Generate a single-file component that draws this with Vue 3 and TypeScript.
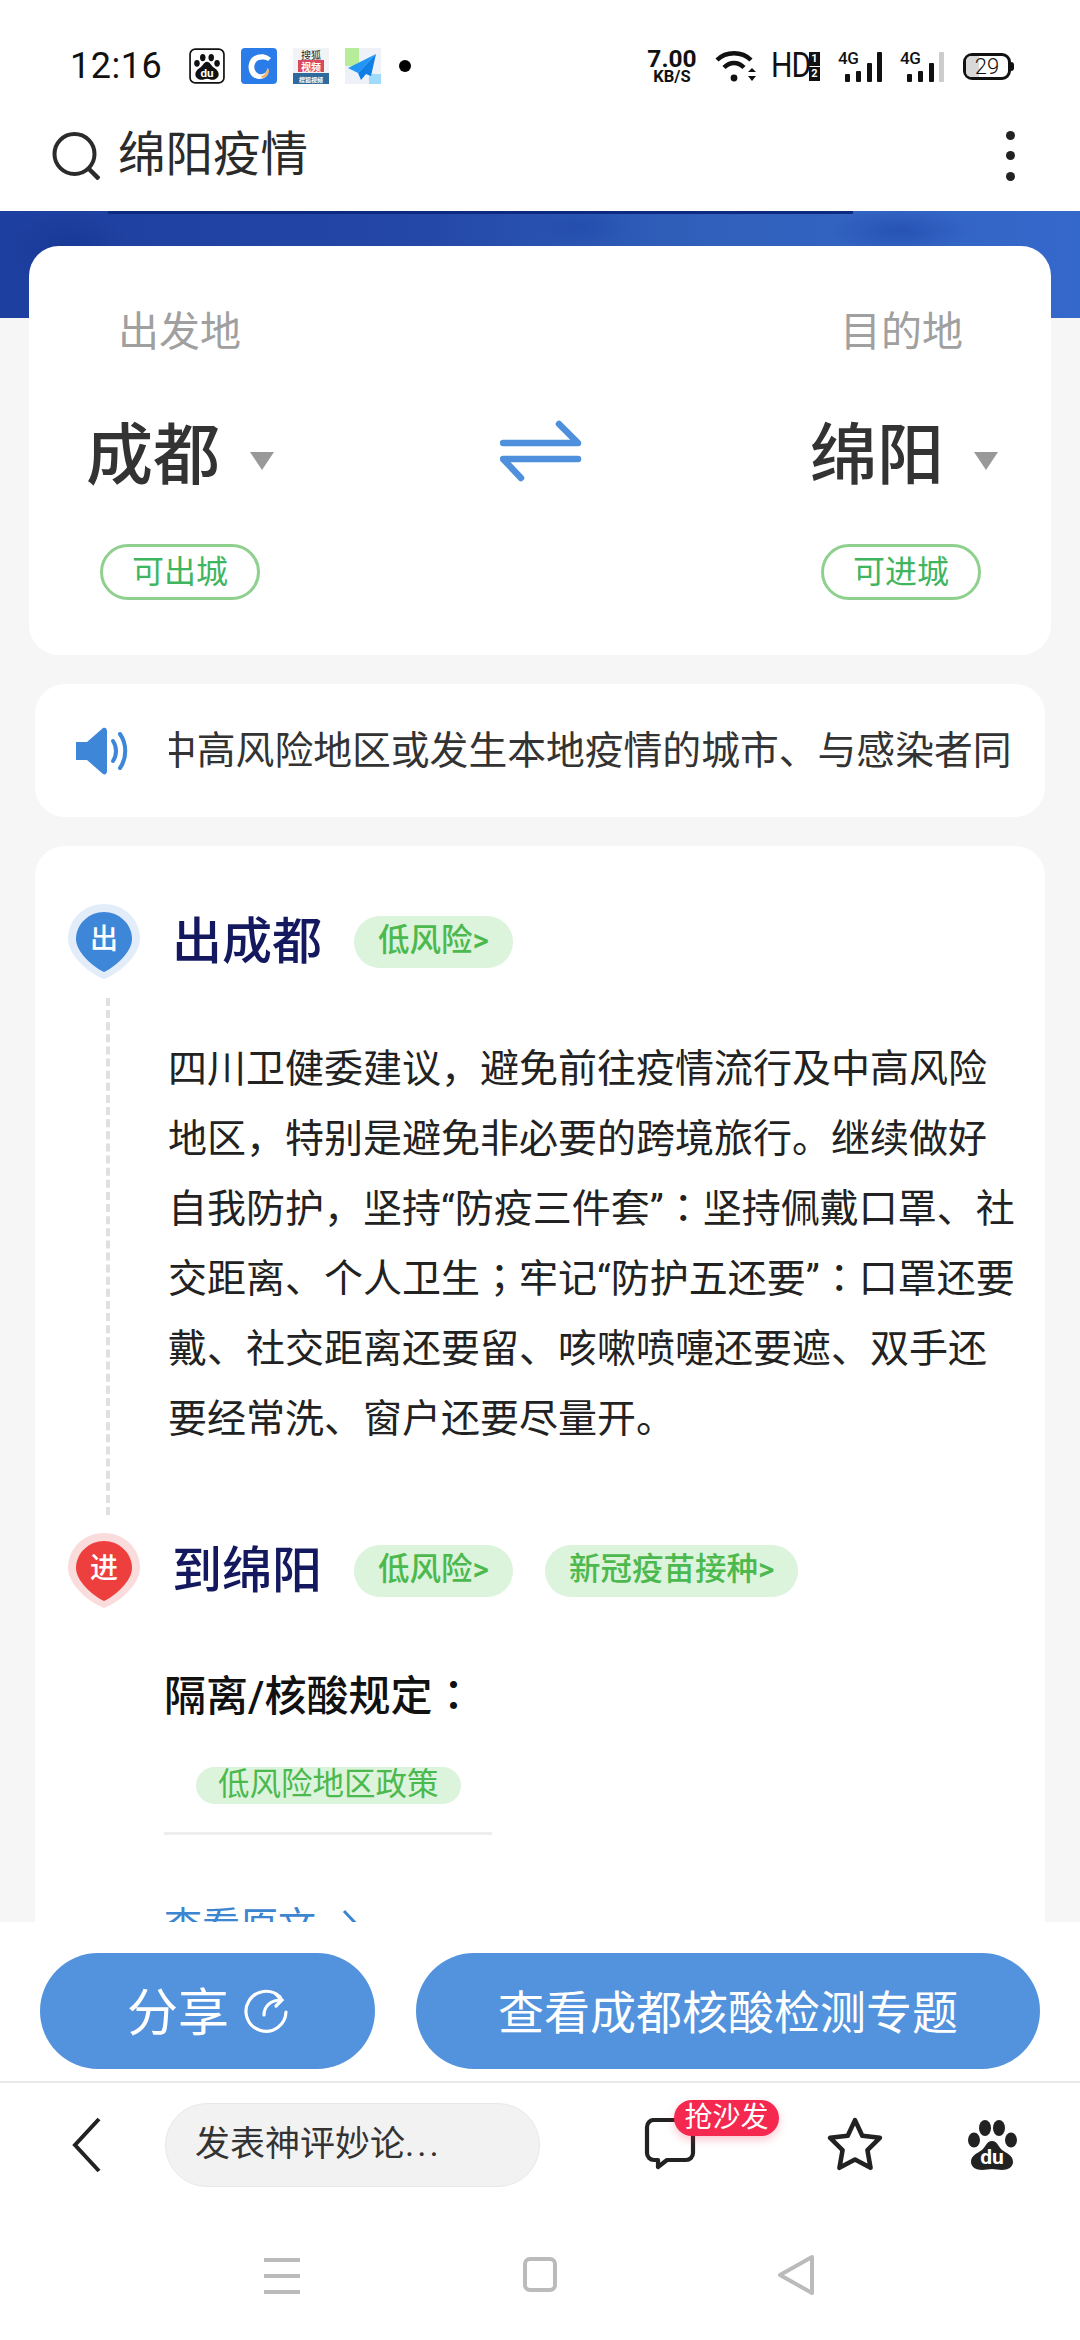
<template>
  <div class="phone">
    <!-- status bar -->
    <div class="status">
      <span class="time">12:16</span>
      <svg class="app-icon baidu" viewBox="0 0 34 34">
        <rect x="1" y="1" width="32" height="32" rx="5" fill="#fff" stroke="#111" stroke-width="1.6" />
        <ellipse cx="13" cy="9" rx="2.6" ry="3.4" fill="#111" />
        <ellipse cx="21" cy="9" rx="2.6" ry="3.4" fill="#111" />
        <ellipse cx="7.5" cy="14.5" rx="2.6" ry="3.2" fill="#111" />
        <ellipse cx="26.5" cy="14.5" rx="2.6" ry="3.2" fill="#111" />
        <path d="M17 13C20 13 21 17 24 19C27 21 28 23 28 25C28 28 25 30 22 30C20 30 19 29 17 29C15 29 14 30 12 30C9 30 6 28 6 25C6 23 7 21 10 19C13 17 14 13 17 13Z" fill="#111" />
        <text x="17" y="27" text-anchor="middle" class="du-small">du</text>
      </svg>
      <svg class="app-icon dolphin" viewBox="0 0 36 36">
        <rect width="36" height="36" rx="4" fill="#2a7de8" />
        <path d="M27 8C22 5 14 6 10 11C6 17 7 25 12 29C15 31 19 32 23 30C27 28 28 24 27 20C26 25 22 27 18 26C13 24 12 18 15 14C18 11 23 11 27 13L30 10Z" fill="#fff" />
        <path d="M20 28C24 27 26 24 26 20L28 22C28 27 25 30 21 30Z" fill="#f2b36b" />
      </svg>
      <svg class="app-icon sohu" viewBox="0 0 36 36">
        <rect width="36" height="36" fill="#f2f3f5" />
        <rect y="25" width="36" height="11" fill="#2f6a9c" />
        <rect x="5" y="12" width="26" height="12" fill="#d9485c" />
        <text x="18" y="10.5" text-anchor="middle" class="sohu-top">搜狐</text>
        <text x="18" y="22.5" text-anchor="middle" class="sohu-mid">视频</text>
        <text x="18" y="33.5" text-anchor="middle" class="sohu-low">搜狐视频</text>
      </svg>
      <svg class="app-icon plane" viewBox="0 0 36 36">
        <rect width="36" height="36" fill="#eef2f8" />
        <rect width="14" height="18" fill="#b6ec9a" />
        <rect x="24" y="26" width="12" height="10" fill="#9fdcfb" />
        <path d="M31 6L3 20L13 25Z" fill="#2196f5" />
        <path d="M31 6L13 25L16 32L21 26L26 28Z" fill="#0f7fe6" />
      </svg>
      <span class="dot"></span>

      <div class="status-right">
        <div class="speed">
          <span class="speed-num">7.00</span>
          <span class="speed-unit">KB/S</span>
        </div>
        <svg class="wifi" viewBox="0 0 42 32">
          <path d="M2 10C11 1 27 1 36 10" fill="none" stroke="#111" stroke-width="4.4" />
          <path d="M9 17.5C15 11.5 23 11.5 29 17.5" fill="none" stroke="#111" stroke-width="4.4" />
          <circle cx="19" cy="28" r="3.4" fill="#111" />
          <path d="M33 22L37 18L41 22ZM33 26L37 31L41 26Z" fill="#111" />
        </svg>
        <span class="hd">HD</span>
        <div class="sim">
          <span class="sim-top">1</span>
          <span class="sim-bottom">2</span>
        </div>
        <div class="signal">
          <span class="net">4G</span>
          <i class="bar b1"></i><i class="bar b2"></i><i class="bar b3"></i><i class="bar b4"></i>
        </div>
        <div class="signal second">
          <span class="net">4G</span>
          <i class="bar b1"></i><i class="bar b2"></i><i class="bar b3"></i><i class="bar b4 off"></i>
        </div>
        <div class="battery">
          <span class="battery-fill"></span>
          <span class="battery-num">29</span>
        </div>
      </div>
    </div>

    <!-- search header -->
    <div class="search-bar">
      <svg class="search-icon" viewBox="0 0 48 48">
        <circle cx="22.5" cy="22" r="20" fill="none" stroke="#2b2b2b" stroke-width="4" />
        <path d="M36 36L47 47" stroke="#2b2b2b" stroke-width="4.5" />
      </svg>
      <span class="keyword">绵阳疫情</span>
      <div class="more"><i></i><i></i><i></i></div>
    </div>

    <div class="content">
      <div class="banner"></div>

      <section class="route-card">
        <div class="route-side">
          <span class="route-label">出发地</span>
          <div class="city">成都<span class="caret"></span></div>
          <span class="state">可出城</span>
        </div>
        <svg class="swap" viewBox="0 0 82 62">
          <path d="M3 23H78L59 4" fill="none" stroke="#4f90dc" stroke-width="6.5" stroke-linecap="round" stroke-linejoin="round" />
          <path d="M78 39H3L21 58" fill="none" stroke="#4f90dc" stroke-width="6.5" stroke-linecap="round" stroke-linejoin="round" />
        </svg>
        <div class="route-side right">
          <span class="route-label">目的地</span>
          <div class="city">绵阳<span class="caret"></span></div>
          <span class="state">可进城</span>
        </div>
      </section>

      <section class="notice">
        <svg class="speaker" viewBox="0 0 54 48">
          <path d="M1 15H12L28 1C30 0 32 1 32 4V44C32 47 30 48 28 47L12 33H1Z" fill="#3d86d8" />
          <path d="M38 14C42 20 42 28 38 34" fill="none" stroke="#3d86d8" stroke-width="4" stroke-linecap="round" />
          <path d="M45 7C52 17 52 31 45 41" fill="none" stroke="#3d86d8" stroke-width="4" stroke-linecap="round" />
        </svg>
        <div class="notice-track">
          <span>{{ noticeText }}</span>
        </div>
      </section>

      <section class="detail">
        <div class="step-head">
          <svg class="pin" viewBox="0 0 72 75">
            <path d="M36 0C56 0 72 15 72 35C72 52 50 70 36 75C22 70 0 52 0 35C0 15 16 0 36 0Z" fill="#e3edf9" />
            <path d="M36 8C51 8 64 20 64 35C64 48 47 63 36 68C25 63 8 48 8 35C8 20 21 8 36 8Z" fill="#3d86d8" />
            <text x="36" y="45" text-anchor="middle" class="pin-text">出</text>
          </svg>
          <h2 class="step-title">出成都</h2>
          <span class="tag">低风险&gt;</span>
        </div>

        <div class="step-body">
          <p>四川卫健委建议，避免前往疫情流行及中高风险地区，特别是避免非必要的跨境旅行。继续做好自我防护，坚持“防疫三件套”<span class="mid-punct">：</span>坚持佩戴口罩、社交距离、个人卫生<span class="mid-punct">；</span>牢记“防护五还要”<span class="mid-punct">：</span>口罩还要戴、社交距离还要留、咳嗽喷嚏还要遮、双手还要经常洗、窗户还要尽量开。</p>
        </div>

        <div class="step-head second">
          <svg class="pin" viewBox="0 0 72 75">
            <path d="M36 0C56 0 72 15 72 35C72 52 50 70 36 75C22 70 0 52 0 35C0 15 16 0 36 0Z" fill="#fbdcdc" />
            <path d="M36 8C51 8 64 20 64 35C64 48 47 63 36 68C25 63 8 48 8 35C8 20 21 8 36 8Z" fill="#ee3f3f" />
            <text x="36" y="45" text-anchor="middle" class="pin-text">进</text>
          </svg>
          <h2 class="step-title">到绵阳</h2>
          <span class="tag">低风险&gt;</span>
          <span class="tag vaccine">新冠疫苗接种&gt;</span>
        </div>

        <div class="rules">
          <h3 class="rules-title">隔离/核酸规定<span class="mid-punct">：</span></h3>
          <span class="policy">低风险地区政策</span>
          <div class="rules-line"></div>
          <a class="origin">
            查看原文
            <svg class="origin-arrow" viewBox="0 0 22 38">
              <path d="M3 2L19 19L3 36" fill="none" stroke="#3c85d0" stroke-width="3" />
            </svg>
          </a>
        </div>
      </section>
    </div>

    <!-- action buttons -->
    <div class="actions">
      <button class="btn share">
        分享
        <svg class="share-icon" viewBox="0 0 44 46">
          <path d="M36 9A20 20 0 1 0 42 24" fill="none" stroke="#fff" stroke-width="3.2" stroke-linecap="round" />
          <path d="M20 27C20 18 27 12 37 12M32 6L38 12L32 18" fill="none" stroke="#fff" stroke-width="3.2" stroke-linecap="round" />
        </svg>
      </button>
      <button class="btn topic">查看成都核酸检测专题</button>
    </div>

    <!-- comment toolbar -->
    <div class="toolbar">
      <svg class="back" viewBox="0 0 30 56">
        <path d="M27 2L3 28L27 54" fill="none" stroke="#222" stroke-width="4" />
      </svg>
      <div class="comment-input">发表神评妙论<span class="dots">...</span></div>
      <div class="comment-btn">
        <svg viewBox="0 0 54 52">
          <path d="M11 2H43a7 7 0 0 1 7 7V35a7 7 0 0 1-7 7H24L15 49V42H11a7 7 0 0 1-7-7V9a7 7 0 0 1 7-7Z" fill="none" stroke="#222" stroke-width="4.2" stroke-linejoin="round" />
        </svg>
        <span class="badge">抢沙发</span>
      </div>
      <svg class="star" viewBox="0 0 54 52">
        <path d="M27 3L34 18L51 20L39 32L42 49L27 41L12 49L15 32L3 20L20 18Z" fill="none" stroke="#222" stroke-width="4.4" stroke-linejoin="round" />
      </svg>
      <svg class="paw" viewBox="0 0 50 50">
        <ellipse cx="17" cy="8" rx="6" ry="8" fill="#222" />
        <ellipse cx="31" cy="8" rx="6" ry="8" fill="#222" />
        <ellipse cx="6" cy="20" rx="6" ry="7.5" fill="#222" />
        <ellipse cx="43" cy="20" rx="6" ry="7.5" fill="#222" />
        <path d="M24 21C29 21 30 26 34 30C38 33 45 35 45 42C45 47 40 50 34 50C30 50 27 49 24 49C21 49 18 50 14 50C8 50 3 47 3 42C3 35 10 33 14 30C18 26 19 21 24 21Z" fill="#222" />
        <text x="24" y="44" text-anchor="middle" class="du-big">du</text>
      </svg>
    </div>

    <!-- system nav -->
    <div class="sys-nav">
      <div class="nav-menu"><i></i><i></i><i></i></div>
      <div class="nav-home"></div>
      <svg class="nav-back" viewBox="0 0 38 40">
        <path d="M35 2L3 20L35 38Z" fill="none" stroke="#bbb" stroke-width="4" stroke-linejoin="round" />
      </svg>
    </div>
  </div>
</template>

<script setup lang="ts">
const noticeText: string = '中高风险地区或发生本地疫情的城市、与感染者同'
</script>

<style>
html,
body {
  margin: 0;
  background: #fff;
}
</style>

<style scoped>
.phone {
  width: 1080px;
  height: 2340px;
  display: flex;
  flex-direction: column;
  overflow: hidden;
  background: #fff;
  font-family: Roboto, 'Noto Sans CJK SC', sans-serif;
  color: #222;
}

/* status bar */
.status {
  height: 100px;
  flex: none;
  display: flex;
  align-items: center;
  padding: 32px 0 0 70px;
  box-sizing: border-box;
}
.time {
  width: 119px;
  font-size: 36px;
  line-height: 40px;
  color: #111;
  letter-spacing: 0.5px;
}
.app-icon {
  width: 36px;
  height: 36px;
  margin-right: 16px;
  flex: none;
}
.du-small {
  font: 700 11px Roboto, sans-serif;
  fill: #fff;
}
.sohu-top {
  font: 10px 'Noto Sans CJK SC', sans-serif;
  fill: #222;
}
.sohu-mid {
  font: 700 10px 'Noto Sans CJK SC', sans-serif;
  fill: #fff;
}
.sohu-low {
  font: 700 6px 'Noto Sans CJK SC', sans-serif;
  fill: #fff;
}
.dot {
  width: 12px;
  height: 12px;
  border-radius: 50%;
  background: #000;
  margin-left: 2px;
}
.status-right {
  margin-left: auto;
  display: flex;
  align-items: center;
  height: 40px;
  padding-right: 69px;
}
.speed {
  width: 50px;
  display: flex;
  flex-direction: column;
  align-items: center;
  color: #111;
  line-height: 1;
}
.speed-num {
  font-size: 24.5px;
  font-weight: 700;
  height: 21px;
}
.speed-unit {
  font-size: 16.5px;
  font-weight: 700;
  margin-top: 1px;
}
.wifi {
  width: 42px;
  height: 32px;
  margin-left: 18px;
}
.hd {
  width: 37px;
  margin-left: 14px;
  font-size: 35px;
  line-height: 36px;
  color: #111;
  transform: scaleX(0.86);
  transform-origin: left center;
  letter-spacing: -1px;
}
.sim {
  width: 11px;
  height: 29px;
  margin-left: 1px;
  display: flex;
  flex-direction: column;
  gap: 1px;
}
.sim span {
  flex: 1;
  background: #111;
  color: #fff;
  font-size: 11px;
  line-height: 14px;
  font-weight: 700;
  text-align: center;
}
.signal {
  position: relative;
  width: 44px;
  height: 31px;
  margin-left: 18px;
  flex: none;
}
.net {
  position: absolute;
  left: 0;
  top: -2px;
  font-size: 17px;
  line-height: 18px;
  font-weight: 500;
  color: #111;
  letter-spacing: -0.5px;
}
.bar {
  position: absolute;
  bottom: 0;
  width: 5px;
  background: #111;
  border-radius: 1px;
}
.b1 { left: 7px; height: 8px; }
.b2 { left: 18px; height: 11px; }
.b3 { left: 29px; height: 19px; }
.b4 { left: 39px; height: 30px; }
.b4.off { background: #ccc; }
.battery {
  position: relative;
  width: 48px;
  height: 27px;
  margin-left: 19px;
  border: 3px solid #111;
  border-radius: 9px;
  box-sizing: border-box;
  flex: none;
}
.battery::after {
  content: '';
  position: absolute;
  right: -6px;
  top: 6px;
  width: 3px;
  height: 9px;
  background: #111;
  border-radius: 0 3px 3px 0;
}
.battery-fill {
  position: absolute;
  left: 0;
  top: 0;
  bottom: 0;
  width: 13px;
  background: #d8d8d8;
  border-radius: 5px 0 0 5px;
}
.battery-num {
  position: absolute;
  left: 0;
  right: 0;
  top: -1px;
  text-align: center;
  font-size: 22px;
  line-height: 23px;
  font-weight: 300;
  color: #111;
}

/* search header */
.search-bar {
  height: 111px;
  flex: none;
  display: flex;
  align-items: center;
  padding: 0 65px 0 52px;
  box-sizing: border-box;
}
.search-icon {
  width: 48px;
  height: 48px;
  flex: none;
}
.keyword {
  margin: 0 0 2px 18px;
  font-size: 47.5px;
  line-height: 56px;
  color: #2b2b2b;
}
.more {
  margin-left: auto;
  display: flex;
  flex-direction: column;
  gap: 11.5px;
}
.more i {
  width: 9px;
  height: 9px;
  border-radius: 50%;
  background: #222;
}

/* scrolling content */
.content {
  flex: 1;
  min-height: 0;
  overflow: hidden;
  background: #f6f6f6;
}
.banner {
  height: 107px;
  background:
    linear-gradient(90deg, transparent 10%, #0b2a80 10%, #0b2a80 79%, transparent 79%) top / 100% 3px no-repeat,
    radial-gradient(ellipse 60px 40px at 70px 40px, rgba(20, 50, 140, 0.6), transparent),
    radial-gradient(ellipse 70px 22px at 900px 20px, rgba(30, 70, 170, 0.6), transparent),
    radial-gradient(ellipse 50px 20px at 580px 16px, rgba(30, 70, 170, 0.5), transparent),
    linear-gradient(90deg, #1d3f9f 0%, #2448a8 40%, #3060bb 65%, #3568cb 100%);
}
.route-card {
  margin: -72px 29px 0;
  height: 409px;
  background: #fff;
  border-radius: 30px;
  display: flex;
  align-items: flex-start;
}
.route-side {
  width: 250px;
  display: flex;
  flex-direction: column;
  align-items: flex-start;
  padding: 58px 0 0 57px;
}
.route-side.right {
  width: 241px;
  padding-left: 0;
  margin-left: auto;
}
.route-label {
  margin-left: 32px;
  font-size: 41px;
  line-height: 56px;
  color: #a0a0a0;
}
.city {
  display: flex;
  align-items: center;
  margin-top: 56px;
  height: 80px;
  font-size: 67px;
  line-height: 80px;
  font-weight: 500;
  color: #333;
}
.caret {
  width: 0;
  height: 0;
  margin: 10px 0 0 30px;
  border-left: 12px solid transparent;
  border-right: 12px solid transparent;
  border-top: 18px solid #999;
}
.state {
  margin: 48px 0 0 14px;
  width: 160px;
  height: 56px;
  box-sizing: border-box;
  border: 3px solid #8fd08f;
  border-radius: 28px;
  font-size: 32px;
  line-height: 50px;
  text-align: center;
  color: #3fb560;
}
.route-side.right .route-label {
  margin-left: 30px;
}
.route-side.right .state {
  margin-left: 11px;
}
.swap {
  width: 82px;
  height: 62px;
  margin: 174px 0 0 164px;
  flex: none;
}
.notice {
  margin: 29px 35px 0;
  height: 133px;
  background: #fff;
  border-radius: 30px;
  display: flex;
  align-items: center;
  padding: 0 34px 0 40px;
  box-sizing: border-box;
}
.speaker {
  width: 54px;
  height: 48px;
  flex: none;
}
.notice-track {
  margin-left: 40px;
  flex: 1;
  overflow: hidden;
  white-space: nowrap;
  font-size: 38.8px;
  line-height: 56px;
  color: #333;
}
.notice-track span {
  display: inline-block;
  margin-left: -11px;
}
.detail {
  margin: 29px 35px 0;
  padding: 58px 33px 0;
  height: 1300px;
  background: #fff;
  border-radius: 30px;
  box-sizing: border-box;
}
.step-head {
  display: flex;
  align-items: center;
  height: 75px;
}
.pin {
  width: 72px;
  height: 75px;
  flex: none;
}
.pin-text {
  font: 500 28px 'Noto Sans CJK SC', sans-serif;
  fill: #fff;
}
.step-title {
  margin: 0 0 0 32px;
  width: 150px;
  font-size: 50px;
  line-height: 60px;
  font-weight: 500;
  color: #14185e;
}
.tag {
  margin-left: 32px;
  height: 52px;
  padding: 0 24px;
  border-radius: 26px;
  background: #dcf3dc;
  color: #4cb94f;
  font-size: 31.5px;
  line-height: 50px;
  font-weight: 500;
}
.step-body {
  margin: 19px 0 18px 38px;
  height: 517px;
  box-sizing: border-box;
  border-left: 4px dashed #e0e0e0;
  padding: 36px 0 0 58px;
}
.step-body p {
  margin: 0;
  width: 852px;
  font-size: 39px;
  line-height: 70px;
  color: #222;
}
/* full-width colon and semicolon sit centred in the reference */
.mid-punct {
  font-family: 'Noto Sans CJK TC', sans-serif;
  line-height: 0;
}
.rules {
  margin-left: 96px;
  display: flex;
  flex-direction: column;
  align-items: flex-start;
}
.rules-title {
  margin: 65px 0 0;
  font-size: 42px;
  line-height: 48px;
  font-weight: 500;
  color: #111;
}
.policy {
  margin: 46px 0 0 32px;
  height: 37px;
  padding: 0 22px;
  border-radius: 19px;
  background: #dcf3dc;
  color: #4cb94f;
  font-size: 31.5px;
  line-height: 36px;
}
.rules-line {
  margin-top: 28px;
  width: 328px;
  height: 3px;
  background: #eee;
}
.origin {
  margin-top: 67px;
  display: flex;
  align-items: flex-start;
  font-size: 38px;
  line-height: 48px;
  color: #3c85d0;
}
.origin-arrow {
  width: 22px;
  height: 38px;
  margin: 7px 0 0 25px;
}

/* action buttons */
.actions {
  flex: none;
  height: 161px;
  box-sizing: border-box;
  padding: 31px 40px 0;
  display: flex;
  gap: 41px;
  background: #fff;
  border-bottom: 2px solid #e8e8e8;
}
.btn {
  height: 116px;
  border: none;
  border-radius: 58px;
  background: #5393dd;
  color: #fff;
  font-family: inherit;
  padding: 0 0 4px;
  display: flex;
  align-items: center;
  justify-content: center;
}
.share {
  width: 335px;
  font-size: 51px;
}
.share-icon {
  width: 44px;
  height: 46px;
  margin: 4px 0 0 15px;
}
.topic {
  flex: 1;
  font-size: 46px;
}

/* comment toolbar */
.toolbar {
  flex: none;
  height: 117px;
  box-sizing: border-box;
  padding: 20px 0 0 72px;
  display: flex;
  align-items: flex-start;
}
.back {
  width: 30px;
  height: 56px;
  margin-top: 14px;
}
.comment-input {
  margin-left: 63px;
  width: 375px;
  height: 84px;
  box-sizing: border-box;
  border: 1px solid #e8e8e8;
  border-radius: 42px;
  background: #f2f2f2;
  padding-left: 29px;
  font-size: 35px;
  line-height: 82px;
  color: #333;
}
.dots {
  letter-spacing: 3px;
}
.comment-btn {
  position: relative;
  margin: 15px 0 0 103px;
  width: 54px;
  height: 52px;
}
.comment-btn svg {
  width: 54px;
  height: 52px;
  display: block;
}
.badge {
  position: absolute;
  left: 31px;
  top: -18px;
  width: 105px;
  height: 36px;
  border-radius: 18px;
  background: #f5284f;
  color: #fff;
  font-size: 28px;
  line-height: 35px;
  text-align: center;
  box-shadow: 0 4px 8px rgba(245, 40, 79, 0.25);
}
.star {
  width: 56px;
  height: 54px;
  margin: 14px 0 0 130px;
}
.paw {
  width: 50px;
  height: 50px;
  margin: 17px 0 0 85px;
}
.du-big {
  font: 700 21px Roboto, sans-serif;
  fill: #fff;
}

/* system nav */
.sys-nav {
  flex: none;
  height: 140px;
  box-sizing: border-box;
  display: flex;
  align-items: flex-start;
  padding: 55px 0 0 264px;
  background: #fff;
}
.nav-menu {
  width: 36px;
  height: 36px;
  margin-top: 3px;
  display: flex;
  flex-direction: column;
  justify-content: space-between;
}
.nav-menu i {
  height: 4px;
  background: #bbb;
}
.nav-home {
  width: 34px;
  height: 35px;
  margin: 2px 0 0 223px;
  box-sizing: border-box;
  border: 4px solid #bbb;
  border-radius: 7px;
}
.nav-back {
  width: 38px;
  height: 40px;
  margin-left: 220px;
}
</style>
